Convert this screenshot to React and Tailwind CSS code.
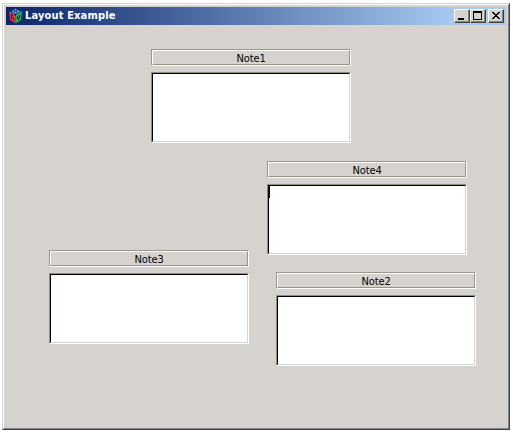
import React from "react";

function Note({ label, caret = false, className = "" }) {
  return (
    <section className={`flex w-[200px] flex-col gap-[6px] ${className}`}>
      <div className="h-[17px] border border-t-[#9a968c] border-l-[#9a968c] border-r-white border-b-white">
        <div className="flex h-[15px] justify-center border border-t-white border-l-white border-r-[#9a9283] border-b-[#9a9283] text-[11px] leading-[15px] tracking-[-0.1px] text-black">
          {label}
        </div>
      </div>
      <div className="h-[71px] border border-t-[#938b7e] border-l-[#938b7e] border-r-white border-b-white">
        <div className="h-[69px] border border-t-black border-l-black border-r-[#d6d3ce] border-b-[#d6d3ce] bg-white">
          {caret && <div className="h-[12px] w-px bg-black" />}
        </div>
      </div>
    </section>
  );
}

function CaptionButton({ label, children, className = "" }) {
  return (
    <button
      aria-label={label}
      className={`h-[14px] w-[16px] border border-t-white border-l-white border-r-[#424142] border-b-[#424142] bg-[#d6d3ce] ${className}`}
    >
      <span className="block h-[12px] w-[14px] border-r border-b border-[#848284]">
        <svg width="13" height="11" viewBox="0 0 13 11" shapeRendering="crispEdges">
          {children}
        </svg>
      </span>
    </button>
  );
}

function CubeIcon() {
  return (
    <svg width="16" height="16" viewBox="0 0 16 16">
      <path d="M1 3.5L7.5 7V15.5L2 12Z" fill="#e0303c" />
      <path d="M7.5 7L14 3.5L13 12L7.5 15.5Z" fill="#1fb04a" />
      <path d="M1.5 3.5L7.5 0.5L14 3.5L7.5 7Z" fill="#2b66b8" />
      <g shapeRendering="crispEdges">
        <path d="M3 6h1v1h1v1H4v3H3zM5 10h1v2H5zM9 8h1v2h1V7h1v3h-1v2h-1v-1H9z" fill="#2a1c28" />
        <path d="M5 3h1v1H5zM7 1h1v1H7zM9 3h2v1H9zM7 4h1v1H7z" fill="#8fc4ec" />
        <path d="M3 3h1v1H3zM6 2h1v1H6zM8 3h1v1H8zM11 2h1v1h-1zM7 6h1v2H7z" fill="#0c1c48" />
      </g>
    </svg>
  );
}

export default function App() {
  return (
    <div className="h-[432px] w-[513px] overflow-hidden bg-white pt-[3px] pl-[2px] font-['DejaVu_Sans_Condensed','DejaVu_Sans',sans-serif]">
      <main className="h-[427px] w-[508px] border border-t-[#d6d3ce] border-l-[#d6d3ce] border-r-[#424142] border-b-[#424142]">
        <div className="h-[425px] w-[506px] border border-t-white border-l-white border-r-[#848284] border-b-[#848284] bg-[#d6d3ce] p-[2px]">
          <header className="flex h-[18px] items-center bg-linear-to-r/srgb from-[#0a246a] to-[#a6caf0] to-[90%] pr-[2px] pl-[2px]">
            <CubeIcon />
            <h1 className="ml-[1px] flex-1 text-[11px] leading-[18px] font-bold tracking-[0.15px] whitespace-nowrap text-white">
              Layout Example
            </h1>
            <CaptionButton label="Minimize">
              <path d="M3 8h6v2H3z" />
            </CaptionButton>
            <CaptionButton label="Maximize">
              <path fillRule="evenodd" d="M2 1h9v9H2zM3 3v6h7V3z" />
            </CaptionButton>
            <CaptionButton label="Close" className="ml-[2px]">
              <path d="M3 2h2v1h1v1h2V3h1V2h2v1h-1v1H9v1H8v1h1v1h1v1h1v1H9V8H8V7H6v1H5v1H3V8h1V7h1V6h1V5H5V4H4V3H3z" />
            </CaptionButton>
          </header>
          <div className="pt-[24px]">
            <Note label="Note1" className="ml-[145px]" />
            <div className="mt-[18px] flex items-start">
              <Note label="Note3" className="mt-[89px] ml-[43px]" />
              <div className="ml-[18px] flex flex-col gap-[17px]">
                <Note label="Note4" caret />
                <Note label="Note2" className="ml-[9px]" />
              </div>
            </div>
          </div>
        </div>
      </main>
    </div>
  );
}
